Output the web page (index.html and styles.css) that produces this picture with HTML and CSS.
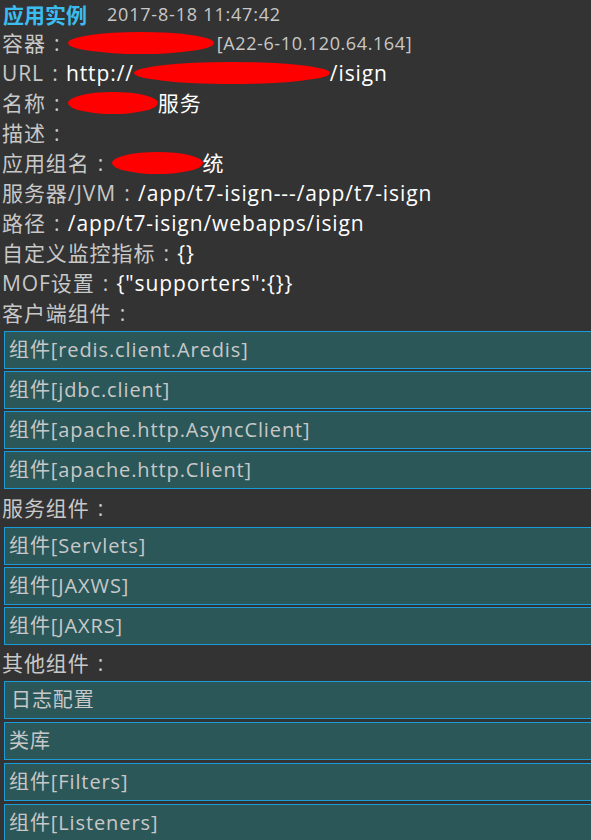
FILE: index.html
```html
<!DOCTYPE html>
<html lang="zh-CN">
<head>
<meta charset="utf-8">
<title>应用实例</title>
<link rel="stylesheet" href="styles.css">
</head>
<body>
<div class="page">
  <div class="header"><span class="title">应用实例</span><span class="time">2017-8-18 11:47:42</span></div>
  <div class="line"><span class="label">容器<span class="c">:</span></span><span class="blob b1"></span><span class="small">[A22-6-10.120.64.164]</span></div>
  <div class="line"><span class="label">URL<span class="c">:</span></span><span class="val">http://</span><span class="blob b2"></span><span class="val">/isign</span></div>
  <div class="line"><span class="label">名称<span class="c">:</span></span><span class="blob b3"></span><span class="val">服务</span></div>
  <div class="line"><span class="label">描述<span class="c">:</span></span></div>
  <div class="line"><span class="label">应用组名<span class="c">:</span></span><span class="blob b4"></span><span class="val">统</span></div>
  <div class="line"><span class="label">服务器/JVM<span class="c">:</span></span><span class="val">/app/t7-isign---/app/t7-isign</span></div>
  <div class="line"><span class="label">路径<span class="c">:</span></span><span class="val">/app/t7-isign/webapps/isign</span></div>
  <div class="line"><span class="label">自定义监控指标<span class="c">:</span></span><span class="val">{}</span></div>
  <div class="line"><span class="label">MOF设置<span class="c">:</span></span><span class="val">{"supporters":{}}</span></div>
  <div class="line"><span class="label">客户端组件<span class="c">:</span></span></div>
  <div class="group g1">
    <div class="item">组件[redis.client.Aredis]</div>
    <div class="item">组件[jdbc.client]</div>
    <div class="item">组件[apache.http.AsyncClient]</div>
    <div class="item">组件[apache.http.Client]</div>
  </div>
  <div class="line heading h2"><span class="label">服务组件<span class="c">:</span></span></div>
  <div class="group">
    <div class="item">组件[Servlets]</div>
    <div class="item">组件[JAXWS]</div>
    <div class="item">组件[JAXRS]</div>
  </div>
  <div class="line heading h3"><span class="label">其他组件<span class="c">:</span></span></div>
  <div class="group g3">
    <div class="item indent">日志配置</div>
    <div class="item">类库</div>
    <div class="item">组件[Filters]</div>
    <div class="item">组件[Listeners]</div>
  </div>
</div>
</body>
</html>
```
FILE: styles.css
```css
html, body {
  margin: 0;
  padding: 0;
  background: #333333;
}
body {
  font-family: "Open Sans", "Noto Sans CJK SC", sans-serif;
  color: #c8c8c8;
  overflow: hidden;
}
.page {
  padding-left: 2px;
}
.header {
  height: 28px;
  line-height: 26px;
  display: flex;
  align-items: center;
  gap: 20px;
  white-space: nowrap;
}
.title {
  font-family: "Noto Sans CJK SC", sans-serif;
  font-weight: bold;
  font-size: 21px;
  color: #3cbdf0;
  padding-left: 1px;
}
.time {
  font-size: 18px;
  letter-spacing: 0.8px;
  color: #c8c8c8;
}
.line {
  height: 30px;
  line-height: 30px;
  font-size: 21px;
  letter-spacing: 0.9px;
  white-space: nowrap;
  display: flex;
  align-items: center;
}
.label {
  color: #c8c8c8;
  display: inline-flex;
  align-items: center;
}
.c {
  display: inline-block;
  width: 22px;
  text-align: center;
  letter-spacing: 0;
  font-weight: normal;
}
.val {
  color: #ffffff;
}
.small {
  font-size: 18px;
  letter-spacing: 0.6px;
  color: #c8c8c8;
  margin-left: 3px;
}
.blob {
  display: inline-block;
  background: #ff0000;
  border-radius: 50%;
  height: 22px;
}
.b1 { width: 146px; }
.b2 { width: 196px; }
.b3 { width: 90px; }
.b4 { width: 91px; }
.group {
  display: flex;
  flex-direction: column;
  gap: 2px;
  margin-left: 2px;
  margin-top: 3px;
}
.g3 { gap: 3px; }
.item {
  box-sizing: border-box;
  width: 600px;
  height: 38px;
  line-height: 36px;
  background: #2b5759;
  border: 1px solid #1b9bd7;
  padding-left: 4px;
  font-size: 20px;
  letter-spacing: 0.9px;
  color: #c8c8c8;
  white-space: nowrap;
}
.indent { padding-left: 6px; }
.heading { margin-top: 2px; }
.h2 { height: 34px; }
.h3 { height: 32px; margin-top: 2px; }
.h2 + .group, .h3 + .group { margin-top: 2px; }
```
